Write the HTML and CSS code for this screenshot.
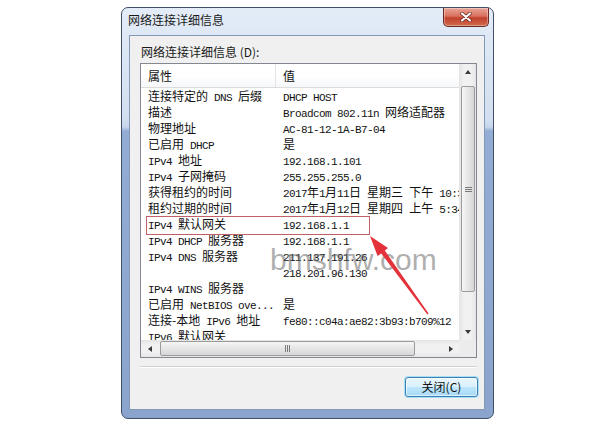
FILE: index.html
```html
<!DOCTYPE html>
<html lang="zh-CN">
<head>
  <meta charset="UTF-8">
  <title>网络连接详细信息</title>
  <link rel="stylesheet" href="styles.css">
</head>
<body>
  <div class="window">
    <div class="titlebar">
      <span class="title">网络连接详细信息</span>
      <button class="close" aria-label="关闭">
        <svg width="12" height="10" viewBox="0 0 12 10">
          <path d="M2 1.5 L10 8.5 M10 1.5 L2 8.5" stroke="#5a1a14" stroke-width="3.4" stroke-linecap="round"/>
          <path d="M2 1.5 L10 8.5 M10 1.5 L2 8.5" stroke="#fff" stroke-width="2.2" stroke-linecap="round"/>
        </svg>
      </button>
    </div>

    <div class="client">
      <div class="caption">网络连接详细信息 (D):</div>

      <div class="list">
        <div class="view">
          <div class="row head"><span>属性</span><span>值</span></div>
          <div class="row"><span>连接特定的<i> DNS </i>后缀</span><span><i>DHCP HOST</i></span></div>
          <div class="row"><span>描述</span><span><i>Broadcom 802.11n </i>网络适配器</span></div>
          <div class="row"><span>物理地址</span><span><i>AC-81-12-1A-B7-04</i></span></div>
          <div class="row"><span>已启用<i> DHCP</i></span><span>是</span></div>
          <div class="row"><span><i>IPv4 </i>地址</span><span><i>192.168.1.101</i></span></div>
          <div class="row"><span><i>IPv4 </i>子网掩码</span><span><i>255.255.255.0</i></span></div>
          <div class="row"><span>获得租约的时间</span><span><i>2017</i>年<i>1</i>月<i>11</i>日<i> </i>星期三<i> </i>下午<i> 10:35:31</i></span></div>
          <div class="row"><span>租约过期的时间</span><span><i>2017</i>年<i>1</i>月<i>12</i>日<i> </i>星期四<i> </i>上午<i> 5:34:23</i></span></div>
          <div class="row"><span><i>IPv4 </i>默认网关</span><span><i>192.168.1.1</i></span></div>
          <div class="row"><span><i>IPv4 DHCP </i>服务器</span><span><i>192.168.1.1</i></span></div>
          <div class="row"><span><i>IPv4 DNS </i>服务器</span><span><i>211.137.191.26</i></span></div>
          <div class="row"><span></span><span><i>218.201.96.130</i></span></div>
          <div class="row"><span><i>IPv4 WINS </i>服务器</span><span></span></div>
          <div class="row"><span>已启用<i> NetBIOS ove...</i></span><span>是</span></div>
          <div class="row"><span>连接-本地<i> IPv6 </i>地址</span><span><i>fe80::c04a:ae82:3b93:b709%12</i></span></div>
          <div class="row"><span><i>IPv6 </i>默认网关</span><span></span></div>
        </div>

        <div class="vscroll">
          <div class="sbtn"><b class="tri up"></b></div>
          <div class="vthumb"><b class="grip"></b></div>
          <div class="sbtn end"><b class="tri down"></b></div>
        </div>
        <div class="hscroll">
          <div class="sbtn"><b class="tri left"></b></div>
          <div class="hthumb"><b class="grip"></b></div>
          <div class="sbtn end"><b class="tri right"></b></div>
        </div>
        <div class="corner"></div>

        <div class="mark"></div>
      </div>

      <div class="sep"></div>

      <div class="actions">
        <button class="btn">关闭(C)</button>
      </div>
    </div>
  </div>

  <div class="watermark">bmshfw.com</div>

  <svg class="arrow" width="600" height="424" viewBox="0 0 600 424">
    <polygon points="370,236 388,248 384.8,250.6 428.6,313.6 427.4,314.4 381.2,253.4 377.6,256" fill="#e4323a"/>
  </svg>
</body>
</html>
```

FILE: styles.css
```css
html, body {
  margin: 0;
  padding: 0;
}

body {
  position: relative;
  width: 600px;
  height: 424px;
  overflow: hidden;
  padding: 7px 0 0 121px;
  box-sizing: border-box;
  background: #fff;
  font-family: "Noto Sans CJK SC", sans-serif;
  font-size: 12px;
  color: #111;
}

/* window frame */
.window {
  display: flex;
  flex-direction: column;
  box-sizing: border-box;
  width: 373px;
  height: 412px;
  padding: 0 8px 8px 7px;
  border: 1px solid #3f5068;
  border-radius: 7px;
  background: linear-gradient(180deg, #e3ecf7 0, #d2dff0 110px, #c6d6ec 119px, #93acd3 123px, #8aa4cd 100%);
}

.titlebar {
  display: flex;
  justify-content: space-between;
  align-items: flex-start;
  height: 27px;
  flex-shrink: 0;
}

.title {
  margin: 4px 0 0 -1px;
  line-height: 16px;
  color: #1a1a1a;
}

.close {
  display: flex;
  align-items: center;
  justify-content: center;
  width: 46px;
  height: 19px;
  margin-right: -4px;
  padding: 0;
  border: 1px solid #6a2a24;
  border-top: 0;
  border-radius: 0 0 5px 5px;
  background: linear-gradient(180deg, #e9a396 0, #d9715f 45%, #c2412d 55%, #d06a4e 100%);
  box-shadow: inset 0 0 0 1px rgb(255 255 255 / .35);
}

.client {
  display: flex;
  flex-direction: column;
  flex-grow: 1;
  box-sizing: border-box;
  padding: 8px 7px 0 10px;
  border: 1px solid #8499b8;
  background: #f0f0f0;
}

.caption {
  padding-left: 1px;
  line-height: 16px;
  color: #1a1a1a;
}

/* list view */
.list {
  position: relative;
  display: grid;
  grid-template-columns: 1fr 17px;
  grid-template-rows: 1fr 17px;
  box-sizing: border-box;
  height: 295px;
  margin-top: 3px;
  border: 1px solid #828790;
  background: #fff;
}

.view {
  overflow: hidden;
}

.row {
  display: grid;
  grid-template-columns: 135px auto;
  height: 16px;
  line-height: 16px;
  white-space: nowrap;
}

.row span {
  padding-left: 7px;
}

.row i {
  font-style: normal;
  font-family: "Liberation Mono", monospace;
  font-size: 11px;
  letter-spacing: -.6px;
  white-space: pre;
}

.row.head {
  height: 24px;
  box-sizing: border-box;
  line-height: 23px;
  border-bottom: 1px solid #dcdcdc;
  background: linear-gradient(180deg, #fff 0, #fff 50%, #f6f7f9 100%);
}

.row.head span:first-child {
  border-right: 1px solid #e4e4e4;
}

.mark {
  position: absolute;
  left: 5px;
  top: 152px;
  width: 222px;
  height: 17px;
  border: 1px solid #c35f68;
  pointer-events: none;
}

/* scroll bars */
.vscroll, .hscroll {
  display: flex;
  background: linear-gradient(90deg, #e4e4e4, #f1f1f1 30%, #f1f1f1 70%, #e6e6e6);
}

.vscroll {
  flex-direction: column;
}

.hscroll {
  background: linear-gradient(180deg, #e4e4e4, #f1f1f1 30%, #f1f1f1 70%, #e6e6e6);
}

.sbtn {
  display: flex;
  align-items: center;
  justify-content: center;
  width: 17px;
  height: 17px;
  flex-shrink: 0;
}

.sbtn.end {
  margin: auto 0 0 auto;
}

.hscroll .sbtn.end {
  margin: 0 0 0 auto;
}

.tri {
  width: 0;
  height: 0;
  border: 3px solid transparent;
}

.tri.up { border-bottom: 4px solid #3a3a3a; border-top: 0; margin-top: -1px; }
.tri.down { border-top: 4px solid #3a3a3a; border-bottom: 0; }
.tri.left { border-right: 4px solid #3a3a3a; border-left: 0; }
.tri.right { border-left: 4px solid #3a3a3a; border-right: 0; }

.vthumb, .hthumb {
  display: flex;
  align-items: center;
  justify-content: center;
  box-sizing: border-box;
  border: 1px solid #9b9b9b;
  border-radius: 2px;
}

.vthumb {
  width: 14px;
  height: 206px;
  margin: 5px 0 0 2px;
  background: linear-gradient(90deg, #f6f6f6, #e6e6e6 50%, #d6d6d6);
}

.hthumb {
  width: 255px;
  height: 15px;
  margin: 1px 0 0 2px;
  background: linear-gradient(180deg, #f6f6f6, #e6e6e6 50%, #d6d6d6);
}

.vthumb .grip {
  width: 7px;
  height: 5px;
  background: repeating-linear-gradient(180deg, #7a7a7a 0 1px, transparent 1px 2px);
}

.hthumb .grip {
  width: 5px;
  height: 7px;
  background: repeating-linear-gradient(90deg, #7a7a7a 0 1px, transparent 1px 2px);
}

.corner {
  background: #ececec;
}

.sep {
  height: 1px;
  margin-top: 8px;
  border-bottom: 1px solid #fff;
  background: #d0d0d0;
}

.actions {
  display: flex;
  justify-content: flex-end;
  margin: 9px -1px 0 0;
}

.btn {
  width: 73px;
  height: 20px;
  padding: 0;
  border: 1px solid #3c7fb1;
  border-radius: 3px;
  background: linear-gradient(180deg, #eaf6fd 0, #d9f0fc 50%, #bee6fd 51%, #a7d9f5 100%);
  box-shadow: 0 0 0 1px #a6e0f6, inset 0 0 0 1px rgb(255 255 255 / .6);
  font: inherit;
  line-height: 18px;
  color: #111;
}

/* overlays */
.watermark {
  position: absolute;
  left: 270px;
  top: 245px;
  font-family: "Liberation Sans", Arial, sans-serif;
  font-size: 30px;
  line-height: 30px;
  color: rgb(105 105 105 / .55);
  pointer-events: none;
}

.arrow {
  position: absolute;
  left: 0;
  top: 0;
  pointer-events: none;
}
```
